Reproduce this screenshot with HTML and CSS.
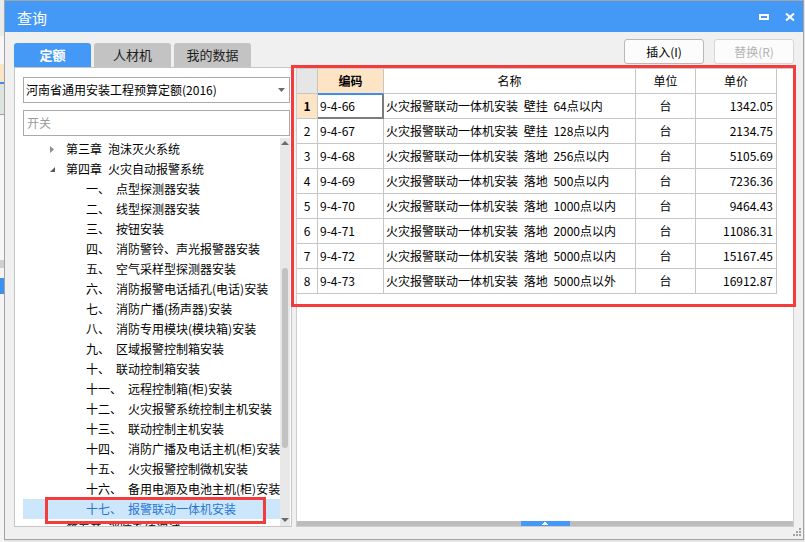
FILE: index.html
```html
<!DOCTYPE html>
<html lang="zh-CN">
<head>
<meta charset="utf-8">
<title>查询</title>
<link rel="stylesheet" href="styles.css">
</head>
<body>
<div class="app-strip">
  <div class="s1"></div><div class="s2"></div><div class="s3"></div><div class="s4"></div><div class="s5"></div><div class="s6"></div><div class="s7"></div><div class="s8"></div><div class="s9"></div><div class="s10"></div><div class="s11"></div>
</div>
<div class="dialog">
  <div class="titlebar">
    <span class="title">查询</span>
    <div class="win-btns">
      <svg class="ico-max" width="10" height="6" viewBox="0 0 10 6"><path fill="#fff" fill-rule="evenodd" d="M0 0H10V6H0Z M2 2V4H8V2Z"/></svg>
      <svg class="ico-close" width="10" height="8" viewBox="0 0 10 8"><path stroke="#fff" stroke-width="2" d="M1 0.5L9 7.5M9 0.5L1 7.5"/></svg>
    </div>
  </div>
  <div class="content">
    <div class="left">
      <div class="tabs">
        <div class="tab active">定额</div>
        <div class="tab">人材机</div>
        <div class="tab">我的数据</div>
      </div>
      <div class="lpanel">
        <div class="select">
          <span>河南省通用安装工程预算定额(2016)</span>
          <svg class="sel-arrow" width="7" height="4" viewBox="0 0 7 4"><path fill="#6a6a6a" d="M0 0H7L3.5 4Z"/></svg>
        </div>
        <div class="search">开关</div>
        <div class="tree">
          <div class="tree-rows">
            <div class="node l1"><span class="exp"><svg width="5" height="7" viewBox="0 0 5 7"><path fill="#8f8f8f" d="M0 0L4 3.5L0 7Z"/></svg></span><span>第三章</span><span class="txt">泡沫灭火系统</span></div>
            <div class="node l1"><span class="exp"><svg width="5" height="5" viewBox="0 0 5 5"><path fill="#5a5a5a" d="M5 0V5H0Z"/></svg></span><span>第四章</span><span class="txt">火灾自动报警系统</span></div>
            <div class="node l2"><span>一、</span><span class="txt">点型探测器安装</span></div>
            <div class="node l2"><span>二、</span><span class="txt">线型探测器安装</span></div>
            <div class="node l2"><span>三、</span><span class="txt">按钮安装</span></div>
            <div class="node l2"><span>四、</span><span class="txt">消防警铃、声光报警器安装</span></div>
            <div class="node l2"><span>五、</span><span class="txt">空气采样型探测器安装</span></div>
            <div class="node l2"><span>六、</span><span class="txt">消防报警电话插孔(电话)安装</span></div>
            <div class="node l2"><span>七、</span><span class="txt">消防广播(扬声器)安装</span></div>
            <div class="node l2"><span>八、</span><span class="txt">消防专用模块(模块箱)安装</span></div>
            <div class="node l2"><span>九、</span><span class="txt">区域报警控制箱安装</span></div>
            <div class="node l2"><span>十、</span><span class="txt">联动控制箱安装</span></div>
            <div class="node l2"><span>十一、</span><span class="txt">远程控制箱(柜)安装</span></div>
            <div class="node l2"><span>十二、</span><span class="txt">火灾报警系统控制主机安装</span></div>
            <div class="node l2"><span>十三、</span><span class="txt">联动控制主机安装</span></div>
            <div class="node l2"><span>十四、</span><span class="txt">消防广播及电话主机(柜)安装</span></div>
            <div class="node l2"><span>十五、</span><span class="txt">火灾报警控制微机安装</span></div>
            <div class="node l2"><span>十六、</span><span class="txt">备用电源及电池主机(柜)安装</span></div>
            <div class="node l2 selected"><span>十七、</span><span class="txt">报警联动一体机安装</span></div>
            <div class="node l1"><span class="exp"><svg width="5" height="7" viewBox="0 0 5 7"><path fill="#8f8f8f" d="M0 0L4 3.5L0 7Z"/></svg></span><span>第五章</span><span class="txt">消防系统调试</span></div>
          </div>
          <div class="vscroll">
            <svg class="arr-up" width="8" height="4" viewBox="0 0 8 4"><path fill="#6b6b6b" d="M4 0L8 4H0Z"/></svg>
            <div class="vthumb"></div>
            <svg class="arr-down" width="8" height="4" viewBox="0 0 8 4"><path fill="#6b6b6b" d="M0 0H8L4 4Z"/></svg>
          </div>
        </div>
        <div class="annot tree-annot"></div>
      </div>
    </div>
    <div class="right">
      <div class="btns">
        <button class="btn">插入(I)</button>
        <button class="btn disabled">替换(R)</button>
      </div>
      <div class="rpanel">
        <div class="grid">
          <div class="grow head">
            <div class="c corner"></div>
            <div class="c hc active-col">编码</div>
            <div class="c hc">名称</div>
            <div class="c hc">单位</div>
            <div class="c hc">单价</div>
          </div>
          <div class="grow">
            <div class="c num cur">1</div>
            <div class="c code sel">9-4-66</div>
            <div class="c name">火灾报警联动一体机安装 壁挂 64点以内</div>
            <div class="c unit">台</div>
            <div class="c price">1342.05</div>
          </div>
          <div class="grow">
            <div class="c num">2</div>
            <div class="c code">9-4-67</div>
            <div class="c name">火灾报警联动一体机安装 壁挂 128点以内</div>
            <div class="c unit">台</div>
            <div class="c price">2134.75</div>
          </div>
          <div class="grow">
            <div class="c num">3</div>
            <div class="c code">9-4-68</div>
            <div class="c name">火灾报警联动一体机安装 落地 256点以内</div>
            <div class="c unit">台</div>
            <div class="c price">5105.69</div>
          </div>
          <div class="grow">
            <div class="c num">4</div>
            <div class="c code">9-4-69</div>
            <div class="c name">火灾报警联动一体机安装 落地 500点以内</div>
            <div class="c unit">台</div>
            <div class="c price">7236.36</div>
          </div>
          <div class="grow">
            <div class="c num">5</div>
            <div class="c code">9-4-70</div>
            <div class="c name">火灾报警联动一体机安装 落地 1000点以内</div>
            <div class="c unit">台</div>
            <div class="c price">9464.43</div>
          </div>
          <div class="grow">
            <div class="c num">6</div>
            <div class="c code">9-4-71</div>
            <div class="c name">火灾报警联动一体机安装 落地 2000点以内</div>
            <div class="c unit">台</div>
            <div class="c price">11086.31</div>
          </div>
          <div class="grow">
            <div class="c num">7</div>
            <div class="c code">9-4-72</div>
            <div class="c name">火灾报警联动一体机安装 落地 5000点以内</div>
            <div class="c unit">台</div>
            <div class="c price">15167.45</div>
          </div>
          <div class="grow">
            <div class="c num">8</div>
            <div class="c code">9-4-73</div>
            <div class="c name">火灾报警联动一体机安装 落地 5000点以外</div>
            <div class="c unit">台</div>
            <div class="c price">16912.87</div>
          </div>
        </div>
        <div class="hscroll">
          <div class="hthumb"><svg width="6" height="3" viewBox="0 0 6 3"><path fill="#fff" d="M2 0H4V1H5V2H6V3H0V2H1V1H2Z"/></svg></div>
        </div>
      </div>
      <div class="annot grid-annot"></div>
    </div>
  </div>
  <svg class="grip" width="9" height="9" viewBox="0 0 9 9"><path fill="#a3a3a3" d="M7 0h2v2H7z M4 3h2v2H4z M7 3h2v2H7z M1 6h2v2H1z M4 6h2v2H4z M7 6h2v2H7z"/></svg>
</div>
</body>
</html>
```

FILE: styles.css
```css
* { box-sizing: border-box; }
html, body { margin: 0; padding: 0; }
body {
  width: 805px;
  height: 542px;
  overflow: hidden;
  display: flex;
  align-items: flex-start;
  background: #e4e4e4;
  font-family: "Noto Sans CJK SC", "Noto Sans", sans-serif;
  font-size: 12px;
  line-height: 1.2;
  color: #000;
}

/* background application visible at left edge */
.app-strip { width: 4px; height: 542px; display: flex; flex-direction: column; background: #f4f4f4; }
.app-strip .s1 { height: 36px; background: #ebebeb; }
.app-strip .s2 { height: 28px; background: #f7f7f7; }
.app-strip .s3 { height: 18px; background: #fbe5c8; }
.app-strip .s4 { height: 2px; background: #3a8ee6; }
.app-strip .s5 { height: 30px; background: #dde4dd; }
.app-strip .s6 { height: 1px; background: #9e9e9e; }
.app-strip .s7 { height: 145px; background: #f7f7f7; }
.app-strip .s8 { height: 8px; background: #cfcfcf; }
.app-strip .s9 { height: 10px; background: #f4f4f4; }
.app-strip .s10 { height: 16px; background: #3d8ff0; }
.app-strip .s11 { flex: 1; background: #f4f4f4; }

.dialog {
  width: 800px;
  height: 540px;
  border: 1px solid #a3a3a3;
  background: #f0f0f0;
  display: flex;
  flex-direction: column;
  position: relative;
}

.titlebar {
  height: 31px;
  flex: none;
  background: #4499f6;
  color: #fff;
  display: flex;
  align-items: center;
  padding: 0 8px 0 12px;
}
.title { font-size: 15px; line-height: 1; margin-top: 1px; }
.win-btns { margin-left: auto; display: flex; align-items: center; gap: 16px; }
.ico-max { display: block; margin-top: 1px; }
.ico-close { display: block; }

.content { flex: 1; display: flex; padding-left: 9px; }

/* left column */
.left { width: 278px; flex: none; display: flex; flex-direction: column; }
.tabs { margin-top: 11px; height: 24px; display: flex; gap: 3px; }
.tab {
  width: 77px;
  border-radius: 3px 3px 0 0;
  background: #c3c3c3;
  color: #1e1e1e;
  font-size: 13px;
  display: flex;
  align-items: center;
  justify-content: center;
}
.tab.active { background: #4499f6; color: #fff; font-weight: bold; }

.lpanel {
  height: 460px;
  background: #fff;
  border: 1px solid #c6c6c6;
  padding: 9px 1px 0 8px;
  display: flex;
  flex-direction: column;
  position: relative;
}
.select {
  height: 26px;
  flex: none;
  border: 1px solid #aaaaaa;
  display: flex;
  align-items: center;
  padding: 0 4px 0 2px;
  white-space: nowrap;
}
.sel-arrow { margin-left: auto; display: block; }
.search {
  margin-top: 7px;
  height: 26px;
  flex: none;
  border: 1px solid #aaaaaa;
  color: #9b9b9b;
  padding-left: 3px;
  display: flex;
  align-items: center;
}
.tree { margin-top: 2px; flex: 1; min-height: 0; display: flex; }
.tree-rows { flex: 1; overflow: hidden; padding-top: 1px; }
.node {
  height: 20px;
  display: flex;
  align-items: center;
  white-space: nowrap;
}
.node.l1 { padding-left: 27px; }
.node.l2 { padding-left: 63px; }
.node .exp { width: 16px; flex: none; display: flex; align-items: center; }
.node .exp svg { display: block; }
.node .txt { margin-left: 6px; }
.node.selected { background: #cce6fb; color: #2776d6; }

.vscroll {
  width: 10px;
  flex: none;
  background: #e8e8e8;
  display: flex;
  flex-direction: column;
  align-items: center;
}
.arr-up { display: block; margin-top: 3px; flex: none; }
.vthumb { margin-top: 123px; width: 6px; height: 180px; border-radius: 3px; background: #c2c2c2; flex: none; }
.arr-down { display: block; margin-top: auto; margin-bottom: 4px; flex: none; }

/* right column */
.right {
  flex: 1;
  display: flex;
  flex-direction: column;
  padding-right: 9px;
  position: relative;
}
.btns { margin-top: 7px; height: 25px; display: flex; justify-content: flex-end; gap: 10px; }
.btn {
  width: 80px;
  height: 25px;
  border: 1px solid #b8b8b8;
  border-radius: 3px;
  background: #fcfcfc;
  font-family: "Noto Sans CJK SC", "Noto Sans", sans-serif;
  font-size: 12px;
  color: #000;
  padding: 0;
}
.btn.disabled { color: #b3b3b3; border-color: #d6d6d6; }

.rpanel {
  margin: 4px 0 0 4px;
  height: 459px;
  border: 1px solid #cdcdcd;
  background: #fff;
  display: flex;
  flex-direction: column;
}
.grid { flex: 1; }
.grow {
  display: grid;
  grid-template-columns: 21px 66px 252px 60px 81px;
  height: 25px;
}
.c {
  border-right: 1px solid #c6c6c6;
  border-bottom: 1px solid #c6c6c6;
  display: flex;
  align-items: center;
  white-space: nowrap;
  overflow: hidden;
}
.head .c { justify-content: center; }
.corner { background: #e6e6e6; }
.active-col { background: #fde4c4; font-weight: bold; border-bottom-color: #3d8ef0; }
.num { justify-content: center; }
.num.cur { background: #fde4c4; font-weight: bold; }
.code { padding-left: 2px; }
.code.sel {
  border-right-color: #7c7c7c;
  border-bottom-color: #7c7c7c;
  box-shadow: inset 0 1px 0 #3d8ef0, inset -1px -1px 0 #7c7c7c;
}
.name { padding-left: 2px; white-space: pre; word-spacing: 3px; }
.unit { justify-content: center; }
.price { justify-content: flex-end; padding-right: 3px; }

.hscroll { height: 5px; flex: none; background: #bdbdbd; display: flex; justify-content: center; }
.hthumb { width: 49px; height: 5px; background: #4499f6; display: flex; justify-content: center; align-items: center; }
.hthumb svg { display: block; }

/* red annotation boxes drawn over content */
.annot { position: absolute; border: 3px solid #f43c3c; pointer-events: none; }
.grid-annot { left: -1px; top: 33px; width: 505px; height: 242px; }
.tree-annot { left: 30px; top: 429px; width: 221px; height: 27px; }

.grip { position: absolute; right: 2px; bottom: 2px; display: block; }
```
